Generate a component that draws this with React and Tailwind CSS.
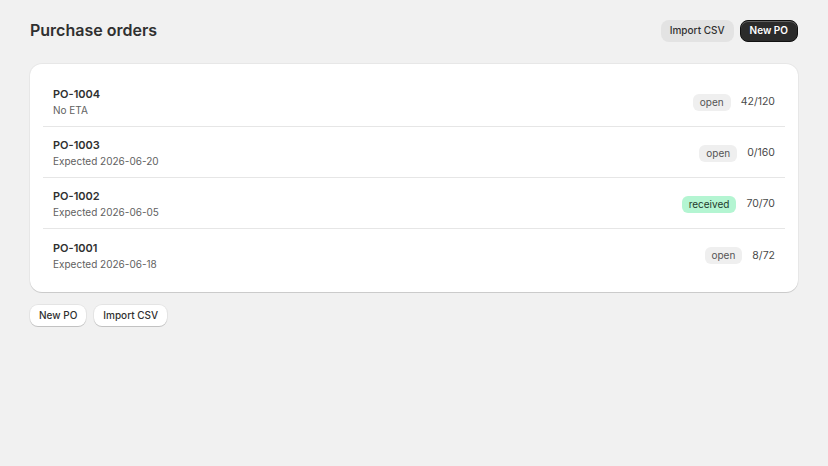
const orders = [
  { id: "PO-1004", eta: "No ETA", status: "open", count: "42/120" },
  { id: "PO-1003", eta: "Expected 2026-06-20", status: "open", count: "0/160" },
  { id: "PO-1002", eta: "Expected 2026-06-05", status: "received", count: "70/70" },
  { id: "PO-1001", eta: "Expected 2026-06-18", status: "open", count: "8/72" },
];

const StatusBadge = ({ status }) => {
  const tone =
    status === "received"
      ? "bg-[#b4f5d2] text-[#1f3a2c]"
      : "bg-[#efefef] text-[#555]";
  return (
    <span className={"rounded-md px-[7px] py-[2px] text-[10px] leading-[13px] " + tone}>
      {status}
    </span>
  );
};

export default function App() {
  return (
    <div className="min-h-[466px] bg-[#f1f1f1] px-[30px] pt-[19px] font-['Inter',sans-serif] text-[#2a2a2a]">
      <header className="flex items-center justify-between">
        <h1 className="text-[16px] font-semibold leading-[23px] text-[#303030]">Purchase orders</h1>
        <div className="flex gap-[6px]">
          <button className="h-[22px] rounded-lg bg-[#e3e3e3] px-[9px] text-[10px] font-medium text-[#303030]">
            Import CSV
          </button>
          <button className="h-[22px] rounded-lg border border-[#111] bg-[#2b2b2b] px-[9px] text-[10px] font-semibold text-white shadow-[inset_0_1px_0_rgba(255,255,255,0.25)]">
            New PO
          </button>
        </div>
      </header>

      <section className="mt-[22px] rounded-xl bg-white px-[13px] py-[12px] shadow-[0_1px_0_rgba(0,0,0,0.12),0_0_0_1px_rgba(0,0,0,0.04)]">
        {orders.map((o, i) => (
          <div
            key={o.id}
            className={
              "flex h-[51px] items-center justify-between px-[10px] pt-[2px] " +
              (i < orders.length - 1 ? "border-b border-[#e6e6e6]" : "")
            }
          >
            <div className="flex flex-col">
              <span className="text-[11px] font-semibold leading-[16px] text-[#303030]">{o.id}</span>
              <span className="text-[10px] leading-[16px] text-[#616161]">{o.eta}</span>
            </div>
            <div className="flex items-center gap-[10px]">
              <StatusBadge status={o.status} />
              <span className="text-[10.5px] text-[#4a4a4a]">{o.count}</span>
            </div>
          </div>
        ))}
      </section>

      <div className="mt-[13px] flex gap-[8px]">
        <button className="h-[21px] rounded-lg bg-white px-[9px] text-[10px] font-medium text-[#303030] shadow-[0_1px_0_rgba(0,0,0,0.15),0_0_0_1px_rgba(0,0,0,0.05)]">
          New PO
        </button>
        <button className="h-[21px] rounded-lg bg-white px-[9px] text-[10px] font-medium text-[#303030] shadow-[0_1px_0_rgba(0,0,0,0.15),0_0_0_1px_rgba(0,0,0,0.05)]">
          Import CSV
        </button>
      </div>
    </div>
  );
}
